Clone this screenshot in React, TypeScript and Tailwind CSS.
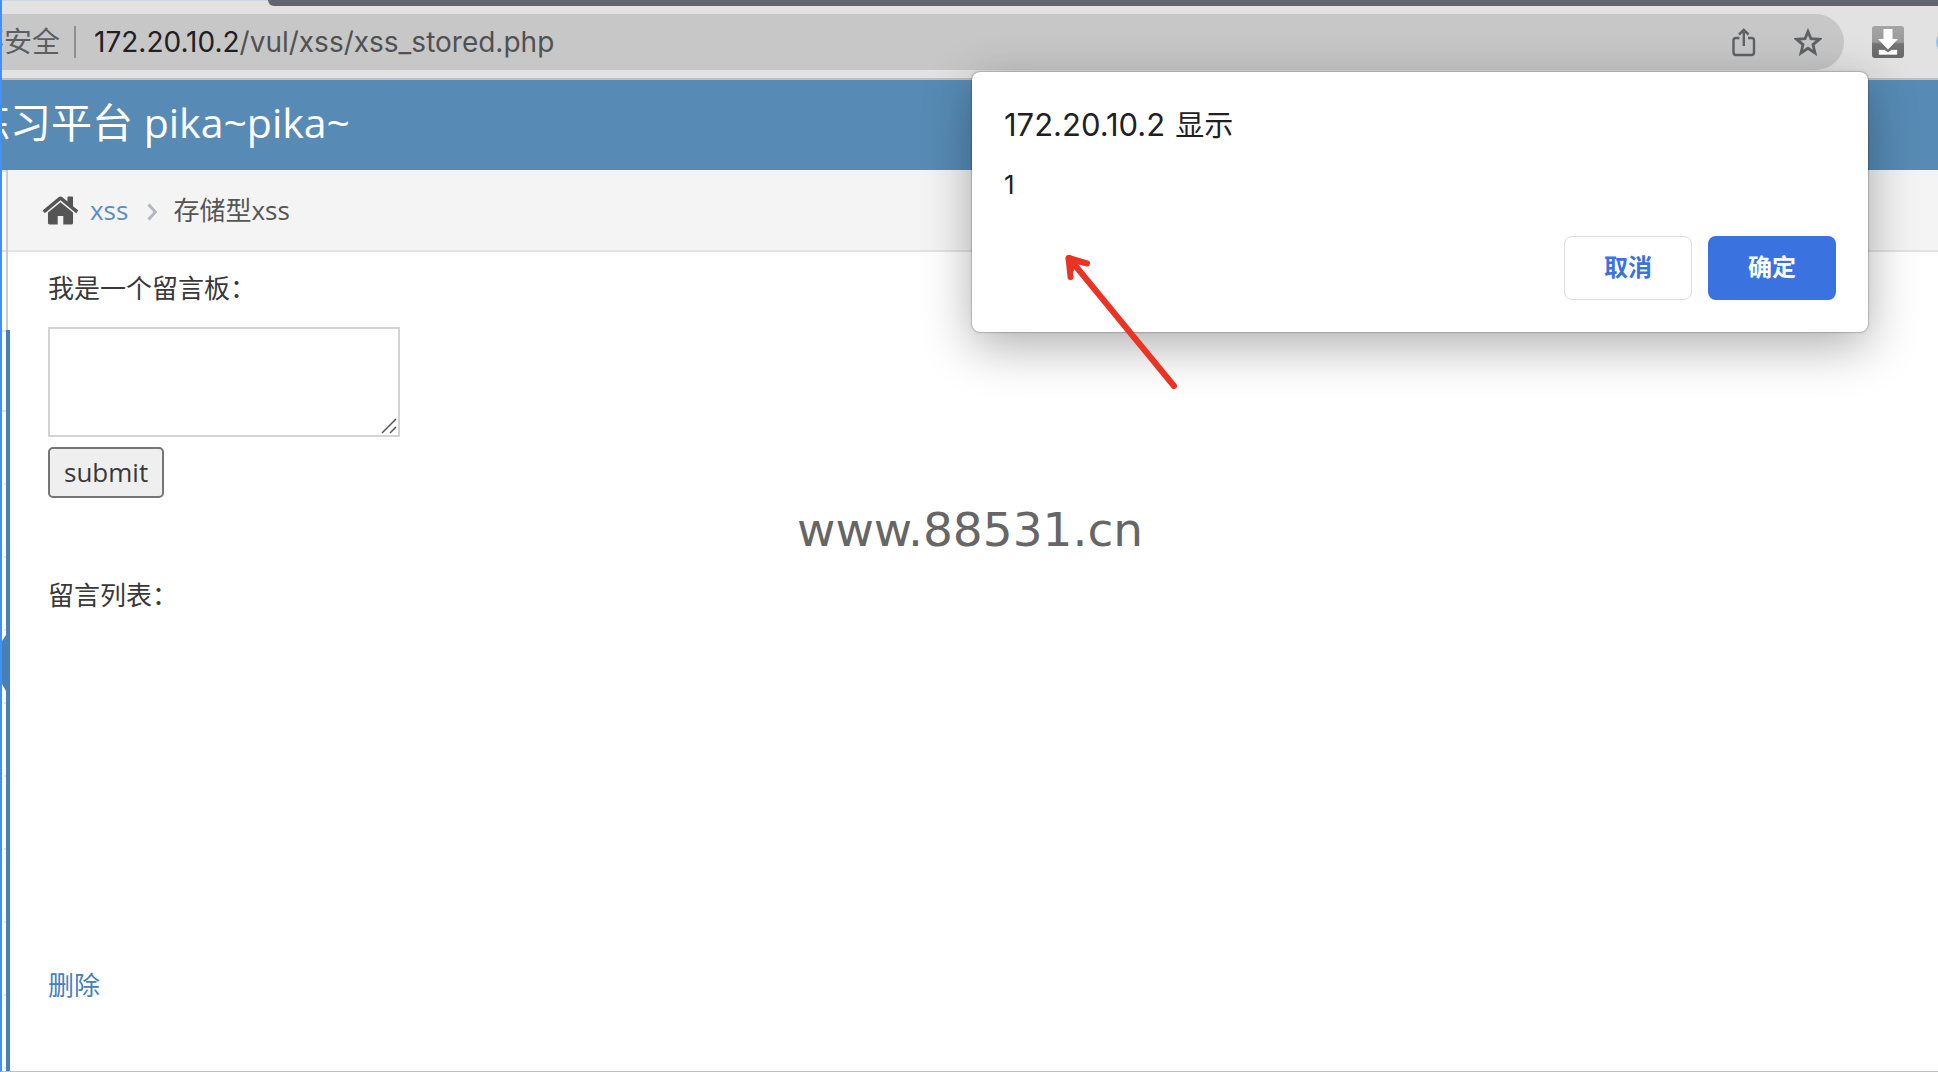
import React from "react";

const rows = [0, 1, 2, 3, 4, 5, 6, 7];

function HomeIcon() {
  return (
    <svg viewBox="0 0 1792 1792" className="size-[39px] fill-[#555]" aria-hidden="true">
      <path d="M1472 992v480q0 26-19 45t-45 19h-384v-384h-256v384h-384q-26 0-45-19t-19-45v-480q0-1 .5-3t.5-3l575-474 575 474q1 2 1 6zm223-69l-62 74q-8 9-21 11h-3q-13 0-21-7l-692-577-692 577q-12 8-24 7-13-2-21-11l-62-74q-8-10-7-23.5t11-21.5l719-599q32-26 76-26t76 26l244 204v-195q0-14 9-23t23-9h192q14 0 23 9t9 23v408l219 182q10 8 11 21.5t-7 23.5z" />
    </svg>
  );
}

function Toolbar() {
  return (
    <header className="relative flex h-20 items-center overflow-hidden border-b-2 border-[#bfbfbf] bg-[#e2e2e2] pt-[6px]">
      <div className="absolute top-0 right-0 left-0 h-px bg-[#ccd6e8]" />
      <div className="absolute top-0 right-0 left-[266px] h-[6px] rounded-bl-[10px] border-t border-[#5d6779] bg-[#656468]" />
      <div className="flex h-14 flex-1 items-center rounded-r-full bg-[#c7c7c7] pr-[22px] font-[Inter,'Noto_Sans_CJK_SC',sans-serif] text-[28px] text-[#505153]">
        <span className="-ml-[26px] whitespace-nowrap text-[#5b5e62]">不安全</span>
        <span className="mr-[18px] ml-[14px] h-8 w-[2px] bg-[#8e8f91]" />
        <span className="flex-1 whitespace-nowrap">
          <span className="text-[#1f2023]">172.20.10.2</span>/vul/xss/xss_stored.php
        </span>
        <button aria-label="分享" className="mr-[36px]">
          <svg viewBox="0 0 28 32" className="h-8 w-7" fill="none" stroke="#5f6164" strokeWidth="2.4">
            <path d="M9.500 12H6a2.500 2.500 0 0 0-2.500 2.500v12A2.500 2.500 0 0 0 6 29h15.500a2.500 2.500 0 0 0 2.500-2.500v-12a2.500 2.500 0 0 0-2.500-2.500H18M13.800 20V4M9 8.500L13.800 4l4.800 4.500" />
          </svg>
        </button>
        <button aria-label="收藏">
          <svg viewBox="0 0 28 28" className="size-7" fill="none" stroke="#5f6164" strokeWidth="2.800">
            <path d="M14 3.500l2.900 7.200 8.500.6-6.400 5.300 2 8.400L14 20.300 7 25l2-8.400-6.400-5.300 8.500-.6z" />
          </svg>
        </button>
      </div>
      <button aria-label="下载" className="mr-[34px] ml-7">
        <svg viewBox="0 0 32 32" className="size-8">
          <defs>
            <linearGradient id="dl" x1="0" y1="0" x2="0" y2="1">
              <stop offset="0" stopColor="#a5a5a5" />
              <stop offset=".5" stopColor="#9a9a9a" />
              <stop offset=".56" stopColor="#747474" />
              <stop offset="1" stopColor="#686868" />
            </linearGradient>
          </defs>
          <rect width="32" height="32" rx="3" fill="url(#dl)" />
          <path d="M11.500 3h9v10H26L16 23.500 6 13h5.500z" fill="#fff" />
          <path d="M6.500 23.500h6l3.500 2.500 3.500-2.500h6V29h-19z" fill="#fff" stroke="#5b5b5b" strokeWidth=".6" />
        </svg>
      </button>
      <span className="absolute top-[30px] -right-[22px] size-6 rounded-full bg-[#8fc4ee]" />
    </header>
  );
}

function Sidebar() {
  return (
    <aside className="relative flex w-1 shrink-0 flex-col overflow-hidden bg-white">
      <div className="h-20 border-t-2 border-[#e0e0e0] bg-[#fafafa]" />
      <div className="h-20 border-t-2 border-[#e0e0e0]" />
      <div className="h-20 border-t-2 border-[#e0e0e0]" />
      <div className="h-[73px] border-t-2 border-[#e0e0e0]" />
      {rows.map((r) => (
        <div key={r} className="ml-[2px] h-[73px] shrink-0 border-t-2 border-[#e4e4e4]" />
      ))}
      <div className="ml-[2px] flex-1 border-t-2 border-[#e4e4e4]" />
      <svg viewBox="0 0 4 56" className="absolute top-[465px] left-0 h-14 w-1 fill-[#4580b9]">
        <path d="M4 0L0 6v43l4 7z" />
      </svg>
    </aside>
  );
}

function AlertDialog() {
  return (
    <div
      role="dialog"
      aria-labelledby="alert-title"
      className="absolute top-[72px] right-[70px] w-[896px] rounded-lg bg-white px-8 pt-8 pb-8 font-[Inter,'Noto_Sans_CJK_SC',sans-serif] text-[#1f2023] shadow-[0_0_2px_rgba(0,0,0,0.6),0_14px_50px_rgba(0,0,0,0.32)]"
    >
      <h2 id="alert-title" className="flex h-11 items-baseline gap-[10px] text-[31px] leading-[42px]">
        172.20.10.2 <span className="text-[29px]">显示</span>
      </h2>
      <p className="mt-4 text-[26px] leading-[42px]">1</p>
      <div className="mt-[30px] flex justify-end gap-4 text-2xl font-bold">
        <button className="h-16 w-32 rounded-lg border border-[#dadce0] text-[#3a73df]">取消</button>
        <button className="h-16 w-32 rounded-lg bg-[#3a73df] text-white">确定</button>
      </div>
      <svg viewBox="0 0 120 142" className="absolute top-[179px] left-[90px] h-[142px] w-[120px]" fill="none" stroke="#ea3323" strokeWidth="6" strokeLinecap="round" strokeLinejoin="round">
        <path d="M112 135L7 7" />
        <path d="M24.500 12.500L7 6.500l2 20L14 14z" fill="#ea3323" stroke="none" />
        <path d="M25 12.500L6.500 7l2 19" />
      </svg>
    </div>
  );
}

export default function App() {
  return (
    <div className="relative flex min-h-screen flex-col overflow-hidden border-b border-l-2 border-b-[#9cc3f2] border-l-[#4190f8] bg-white font-['Open_Sans','Noto_Sans_CJK_SC',sans-serif] text-[26px] text-[#393939]">
      <Toolbar />
      <div className="flex h-[90px] items-center bg-[#578bb5] pb-1 text-[41px] text-white">
        <h1 className="-ml-[33px] whitespace-nowrap">练习平台 pika~pika~</h1>
      </div>
      <div className="flex flex-1">
        <Sidebar />
        <div className="flex w-1 shrink-0 flex-col">
          <div className="h-40 w-[2px] bg-[#ccc]" />
          <div className="flex-1 bg-[#4580b9]" />
        </div>
        <main className="-ml-[2px] flex-1">
          <nav className="flex h-[82px] items-center border-b-2 border-[#e3e3e3] bg-[#f4f4f4] pl-[33px] text-[#555]">
            <HomeIcon />
            <a href="#xss" className="ml-[10px] text-[#5b8fc0]">xss</a>
            <svg viewBox="0 0 10 18" className="mt-1 mr-4 ml-[19px] h-[18px] w-[10px]" fill="none" stroke="#b2b6bf" strokeWidth="3">
              <path d="M1.500 1.500L8.500 9l-7 7.500" />
            </svg>
            <span>存储型xss</span>
          </nav>
          <form className="flex flex-col items-start pt-4 pl-10" onSubmit={(e: React.FormEvent) => e.preventDefault()}>
            <label htmlFor="message" className="leading-[40px]">我是一个留言板：</label>
            <div className="relative mt-[19px] flex">
              <textarea id="message" className="h-[110px] w-[352px] resize-none border-2 border-[#d3d3d3] bg-white p-2 outline-none" />
              <svg viewBox="0 0 16 16" className="absolute right-[3px] bottom-[3px] size-4" stroke="#555" strokeWidth="1.500">
                <path d="M1 15L15 1M9 15l6-6" />
              </svg>
            </div>
            <button type="submit" className="mt-[10px] h-[51px] rounded-[5px] border-2 border-[#767676] bg-[#efefef] px-[14px] pb-[2px] leading-none">submit</button>
          </form>
          <section className="pl-10">
            <p className="mt-[77px] leading-[40px]">留言列表：</p>
            <a href="#delete" className="mt-[350px] block w-fit leading-[40px] text-[#4580b9]">删除</a>
          </section>
        </main>
      </div>
      <p className="absolute inset-x-0 top-[502px] text-center font-['DejaVu_Sans',sans-serif] text-[47px] leading-[56px] text-[#666]">www.88531.cn</p>
      <AlertDialog />
    </div>
  );
}
